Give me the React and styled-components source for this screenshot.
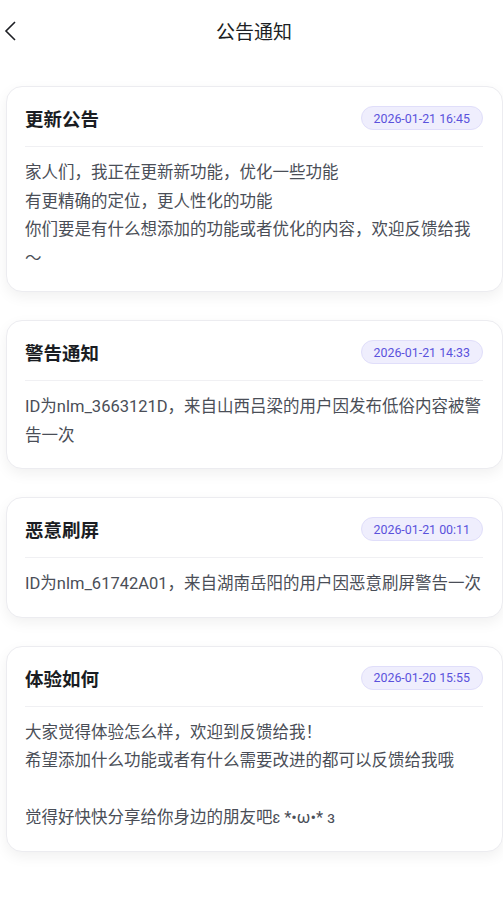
import React from 'react'
import styled, { createGlobalStyle } from 'styled-components'

const GlobalStyle = createGlobalStyle`
  body {
    margin: 0;
    background: #fff;
    font-family: Roboto, "Noto Sans CJK SC", sans-serif;
    overflow-x: hidden;
  }
`

const Page = styled.div`
  width: 100%;
  min-height: 100vh;
  background: #fff;
`

const Header = styled.div`
  position: relative;
  height: 60px;
  display: flex;
  align-items: center;
  justify-content: center;
`

const BackButton = styled.button`
  position: absolute;
  left: 0;
  top: 19px;
  width: 20px;
  height: 24px;
  padding: 0;
  border: none;
  background: none;
  display: flex;
  align-items: center;
  justify-content: center;
`

const Title = styled.h1`
  margin: 0;
  font-size: 19px;
  font-weight: 400;
  color: #1d1f24;
  padding-left: 5px;
`

const List = styled.div`
  display: flex;
  flex-direction: column;
  gap: 28px;
  padding: 26px 0 30px 6px;
`

const Card = styled.div`
  background: #fff;
  border: 1px solid #ececf0;
  border-radius: 16px;
  box-shadow: 0 5px 14px rgba(0, 0, 0, 0.06);
  padding: 19px 19px 18px 18px;
`

const CardHead = styled.div`
  display: flex;
  align-items: center;
  justify-content: space-between;
  height: 24px;
`

const CardTitle = styled.h2`
  margin: 0;
  font-size: 18.5px;
  font-weight: 700;
  color: #1a1d23;
`

const DateBadge = styled.span`
  height: 24px;
  box-sizing: border-box;
  padding: 0 12px;
  display: flex;
  align-items: center;
  border-radius: 12px;
  background: #efeefd;
  border: 1px solid #e0defa;
  color: #5a52dc;
  font-size: 12.4px;
`

const Divider = styled.div`
  height: 1px;
  background: #f0f0f3;
  margin-top: 16px;
`

const Body = styled.p`
  margin: 12px 0 0;
  font-size: 16.5px;
  line-height: 28.5px;
  color: #4a4e57;
  white-space: pre-line;
`

const notices = [
  {
    title: '更新公告',
    date: '2026-01-21 16:45',
    text: '家人们，我正在更新新功能，优化一些功能\n有更精确的定位，更人性化的功能\n你们要是有什么想添加的功能或者优化的内容，欢迎反馈给我～',
  },
  {
    title: '警告通知',
    date: '2026-01-21 14:33',
    text: 'ID为nlm_3663121D，来自山西吕梁的用户因发布低俗内容被警告一次',
  },
  {
    title: '恶意刷屏',
    date: '2026-01-21 00:11',
    text: 'ID为nlm_61742A01，来自湖南岳阳的用户因恶意刷屏警告一次',
  },
  {
    title: '体验如何',
    date: '2026-01-20 15:55',
    text: '大家觉得体验怎么样，欢迎到反馈给我！\n希望添加什么功能或者有什么需要改进的都可以反馈给我哦\n\u00a0\n觉得好快快分享给你身边的朋友吧ɛ *•ω•* ɜ',
  },
]

export default function App() {
  return (
    <Page>
      <GlobalStyle />
      <Header>
        <BackButton aria-label="返回">
          <svg width="14" height="22" viewBox="0 0 14 22" fill="none">
            <polyline points="12,2 3,11 12,20" stroke="#1d1f24" strokeWidth="1.6" strokeLinejoin="miter" />
          </svg>
        </BackButton>
        <Title>公告通知</Title>
      </Header>
      <List>
        {notices.map((n) => (
          <Card key={n.title}>
            <CardHead>
              <CardTitle>{n.title}</CardTitle>
              <DateBadge>{n.date}</DateBadge>
            </CardHead>
            <Divider />
            <Body>{n.text}</Body>
          </Card>
        ))}
      </List>
    </Page>
  )
}
